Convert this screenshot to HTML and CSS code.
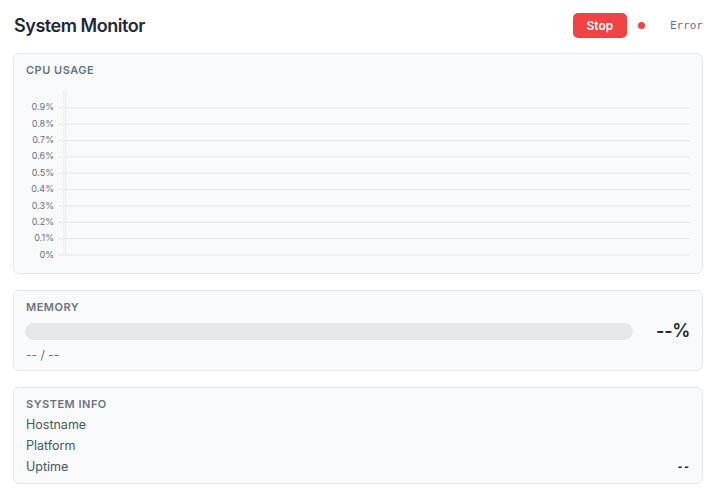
FILE: index.html
```html
<!DOCTYPE html>
<html lang="en">
<head>
<meta charset="utf-8">
<title>System Monitor</title>
<link rel="stylesheet" href="styles.css">
</head>
<body>
<div class="page">
  <header class="header">
    <h1 class="title">System Monitor</h1>
    <div class="controls">
      <button class="btn-stop">Stop</button>
      <span class="dot"></span>
      <span class="status">Error</span>
    </div>
  </header>

  <section class="card">
    <div class="card-label">CPU Usage</div>
    <svg class="chart" width="664" height="186">
      <g class="grid">
        <line x1="32" y1="27.85" x2="664" y2="27.85"/>
        <line x1="32" y1="44.2" x2="664" y2="44.2"/>
        <line x1="32" y1="60.55" x2="664" y2="60.55"/>
        <line x1="32" y1="76.9" x2="664" y2="76.9"/>
        <line x1="32" y1="93.25" x2="664" y2="93.25"/>
        <line x1="32" y1="109.6" x2="664" y2="109.6"/>
        <line x1="32" y1="125.95" x2="664" y2="125.95"/>
        <line x1="32" y1="142.3" x2="664" y2="142.3"/>
        <line x1="32" y1="158.65" x2="664" y2="158.65"/>
        <line x1="32" y1="175" x2="664" y2="175"/>
        <line x1="37.5" y1="10" x2="37.5" y2="175" class="axis-faint"/>
        <line x1="39.5" y1="10" x2="39.5" y2="175"/>
      </g>
      <g class="ticks">
        <text x="28" y="28">0.9%</text>
        <text x="28" y="44.3">0.8%</text>
        <text x="28" y="60.7">0.7%</text>
        <text x="28" y="77">0.6%</text>
        <text x="28" y="93.4">0.5%</text>
        <text x="28" y="109.7">0.4%</text>
        <text x="28" y="126.1">0.3%</text>
        <text x="28" y="142.4">0.2%</text>
        <text x="28" y="158.8">0.1%</text>
        <text x="28" y="175.1">0%</text>
      </g>
    </svg>
  </section>

  <section class="card">
    <div class="card-label mem-label">Memory</div>
    <div class="mem-row">
      <div class="bar"><div class="bar-fill" style="width:0%"></div></div>
      <div class="mem-value">--%</div>
    </div>
    <div class="mem-detail">-- / --</div>
  </section>

  <section class="card info-card">
    <div class="card-label info-label">System Info</div>
    <div class="info-row"><span class="info-key">Hostname</span><span class="info-val"></span></div>
    <div class="info-row"><span class="info-key">Platform</span><span class="info-val"></span></div>
    <div class="info-row"><span class="info-key">Uptime</span><span class="info-val">--</span></div>
  </section>
</div>
</body>
</html>
```

FILE: styles.css
```css
* { box-sizing: border-box; }

html, body {
  margin: 0;
  padding: 0;
  background: #ffffff;
}

body {
  font-family: Inter, "Noto Sans", "Liberation Sans", sans-serif;
  color: #1f2937;
}

.page {
  padding: 13px 9px 13px 13px;
}

.header {
  display: flex;
  align-items: center;
  justify-content: space-between;
  height: 25px;
  margin-bottom: 15px;
}

.title {
  margin: 0 0 0 1px;
  font-size: 18px;
  font-weight: 600;
  line-height: 25px;
  color: #1f2937;
  letter-spacing: -0.45px;
}

.controls {
  display: flex;
  align-items: center;
}

.btn-stop {
  height: 25px;
  width: 54px;
  padding: 0;
  border: none;
  border-radius: 5px;
  background: #ef4444;
  color: #ffffff;
  font-family: Inter, "Liberation Sans", sans-serif;
  font-size: 12px;
  font-weight: 600;
}

.dot {
  width: 7px;
  height: 7px;
  border-radius: 50%;
  background: #ef4444;
  margin-left: 11px;
}

.status {
  margin-left: 25px;
  font-family: "DejaVu Sans Mono", "Liberation Mono", monospace;
  font-size: 11px;
  color: #6b7280;
}

.card {
  background: #f9fafb;
  border: 1px solid #e5e7eb;
  border-radius: 6px;
  padding: 10px 12px 7px;
  margin-bottom: 16px;
}

.info-card {
  padding-bottom: 6px;
}

.card-label {
  font-size: 11px;
  line-height: 12px;
  font-weight: 600;
  letter-spacing: 0.5px;
  text-transform: uppercase;
  color: #6b7280;
  margin-bottom: 4px;
}

.chart {
  display: block;
  width: 664px;
  height: 186px;
}

.grid line {
  stroke: #e5e7eb;
  stroke-width: 1;
}

.grid .axis-faint {
  stroke: #eef0f3;
}

.ticks text {
  font-family: Inter, "Liberation Sans", sans-serif;
  font-size: 9px;
  fill: #6b7280;
  text-anchor: end;
  dominant-baseline: middle;
}

.mem-label {
  margin-bottom: 7px;
}

.mem-row {
  display: flex;
  align-items: center;
  height: 22px;
}

.bar {
  flex: 1;
  height: 17px;
  margin-left: -1px;
  border-radius: 9px;
  background: #e5e7eb;
  overflow: hidden;
}

.bar-fill {
  height: 100%;
  background: #3b82f6;
}

.mem-value {
  margin-left: 23px;
  font-size: 18px;
  font-weight: 600;
  line-height: 22px;
  letter-spacing: -0.3px;
  color: #1f2937;
}

.mem-detail {
  margin-top: 5px;
  font-size: 12px;
  line-height: 16px;
  color: #6b7280;
}

.info-row {
  display: flex;
  justify-content: space-between;
  align-items: center;
  font-size: 12.5px;
  line-height: 21px;
}

.info-key {
  color: #4b5563;
}

.info-val {
  font-family: "DejaVu Sans Mono", "Liberation Mono", monospace;
  font-size: 11px;
  font-weight: bold;
  color: #1f2937;
}
```
